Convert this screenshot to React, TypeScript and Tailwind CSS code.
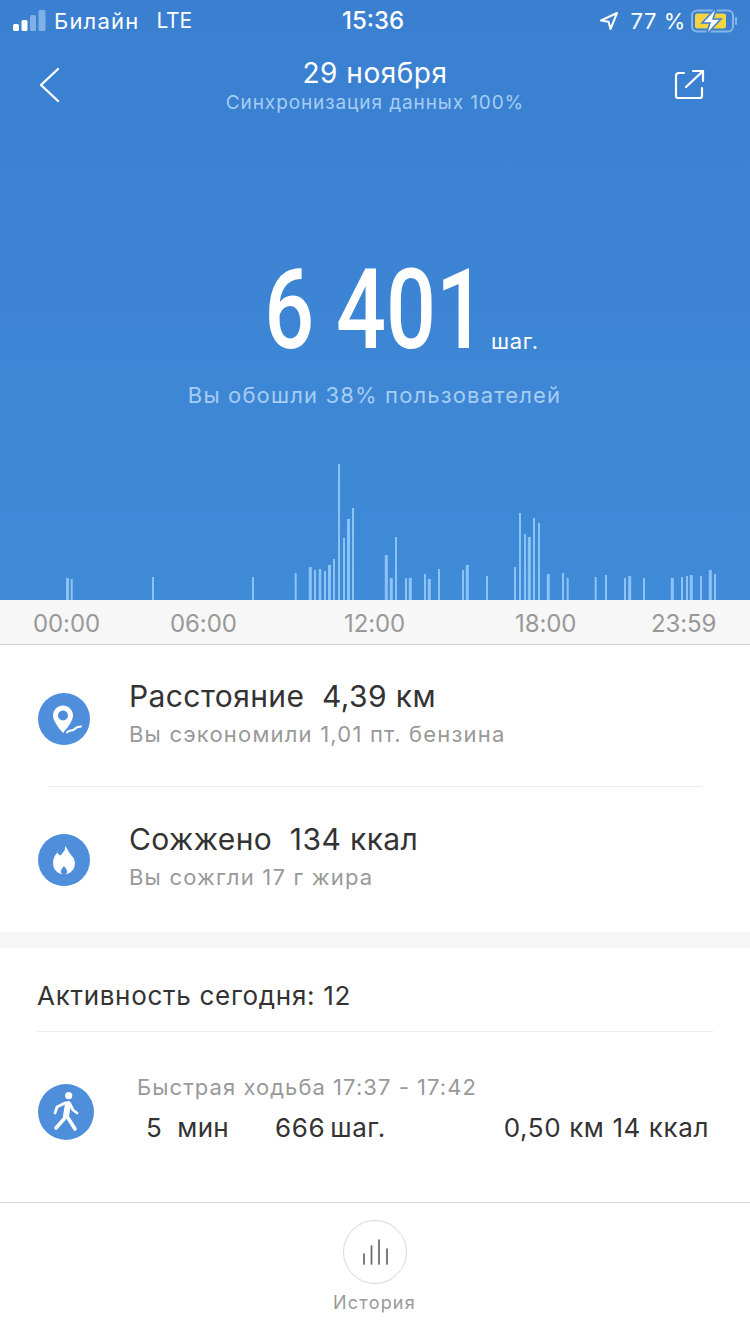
const bars: [number, number, number][] = [
  [67.5,3,22],[71.7,2,21],[153,2,23],[253,2,23],[295.7,2,27],[310.3,3,33],[315,2,30],[320,2.5,31],[325,2,29],[329.5,3,35],[334,2,41],[339,2,136],[344,2,62],[348.5,3,81],[353,2,92],
  [386.3,3,45],[391.3,3,22],[396,2,63],[406,2,22],[410.3,3,22],[425,2,26],[429.3,3,21],[439,2,31],[463,2,30],[467.3,3,35],[487,2,24],[515,2,33],[520,2,87],[525,2,66],[529.3,3,63],[534,2,82],[539,2,77],[548.3,3,26],[563,2,27],[567.7,2,22],[595.7,2,23],[606,2,25],[625,2,22],[629.7,3,24],[644,2,22],[672.3,3,22],[682,2,23],[687,2,24],[691.3,3,25],[701,2,24],[710.3,3,30],[715,2,26],
];

function Chart() {
  return (
    <svg width="750" height="140" viewBox="0 0 750 140" className="block">
      {bars.map(([x, w, h], i) => (
        <rect key={i} x={x - w / 2} y={140 - h} width={w} height={h} fill="#8cc2f4" />
      ))}
    </svg>
  );
}

function Status() {
  return (
    <div className="h-[42px] flex items-center justify-between pl-[13px] pr-[12px] text-white text-[22px] relative">
      <div className="flex items-center">
        <svg width="36" height="24" viewBox="0 0 36 24" className="mr-[5px]">
          <rect x="0" y="15" width="6" height="7" rx="1.5" fill="#fff" />
          <rect x="8.500" y="11" width="6" height="11" rx="1.5" fill="#fff" />
          <rect x="17" y="6" width="6" height="16" rx="1.5" fill="#7fb0e6" />
          <rect x="25.500" y="1" width="7" height="21" rx="1.5" fill="#7fb0e6" />
        </svg>
        <span className="tracking-[1.2px]">Билайн</span>
        <span className="ml-[17px] text-[21px] tracking-[-0.2px]">LTE</span>
      </div>
      <span className="absolute left-[342px] top-[7px] font-medium text-[24px] leading-[28px]">15:36</span>
      <div className="flex items-center">
        <svg width="20" height="20" viewBox="0 0 20 20" fill="none" stroke="#fff" strokeWidth="2" strokeLinejoin="round" className="mr-[11px]">
          <path d="M18 2 2 9.5l7.6 1.2L11.5 18z" />
        </svg>
        <span className="mr-[5px] tracking-[0.6px]">77 %</span>
        <svg width="47" height="28" viewBox="0 0 47 28">
          <rect x="1" y="3.500" width="41" height="21" rx="5" fill="none" stroke="#86b4e8" strokeWidth="2" />
          <rect x="44" y="10" width="2" height="8" rx="1" fill="#86b4e8" />
          <rect x="4" y="6.500" width="31" height="15" rx="2.500" fill="#f5d443" />
          <path d="M26 0 11 16h8l-4 12 15-16h-8z" fill="#fff" stroke="#3a7fd0" strokeWidth="1.500" />
        </svg>
      </div>
    </div>
  );
}

function Nav() {
  return (
    <div className="h-[78px] flex justify-between relative">
      <div className="pl-[38px] pt-[25px]">
        <svg width="24" height="38" viewBox="0 0 24 38" fill="none" stroke="#fff" strokeWidth="2.400" strokeLinecap="round" strokeLinejoin="round">
          <path d="M20 2 3 18l17 16" />
        </svg>
      </div>
      <div className="absolute inset-x-0 top-[10px] flex flex-col items-center">
        <span className="text-white text-[28px] leading-[42px] tracking-[0.5px]">29 ноября</span>
        <span className="text-[#a6cdf3] text-[19px] leading-[20px] -mt-[1px] tracking-[0.9px]">Синхронизация данных 100%</span>
      </div>
      <div className="pr-[44px] pt-[27px]">
        <svg width="32" height="32" viewBox="0 0 32 32" fill="none" stroke="#fff" strokeWidth="2.200" strokeLinecap="round" strokeLinejoin="round">
          <path d="M10 4H5a3 3 0 0 0-3 3v20a2 2 0 0 0 2 2h22a2 2 0 0 0 2-2v-8" />
          <path d="M12 18 29 2" />
          <path d="M19 2h10v10" />
        </svg>
      </div>
    </div>
  );
}

function PinIcon() {
  return (
    <div className="w-[52px] h-[52px] rounded-full bg-[#4f8edb] flex items-center justify-center shrink-0">
      <svg width="36" height="36" viewBox="0 0 36 36">
        <path fillRule="evenodd" d="M17 4.500C11.500 4.500 7 9 7 14.500c0 5 5 12 10 17.500 5-5.500 10-12.500 10-17.500 0-5.500-4.500-10-10-10zm0 5a5 5 0 1 1 0 10 5 5 0 0 1 0-10z" fill="#fff" />
        <path d="M21 31.500c2-3 5-1 7-3s3-3 7-3" fill="none" stroke="#4f8edb" strokeWidth="5" strokeLinecap="round" />
        <path d="M21 31.500c2-3 5-1 7-3s3-3 7-3" fill="none" stroke="#fff" strokeWidth="2" strokeLinecap="round" />
      </svg>
    </div>
  );
}

function FlameIcon() {
  return (
    <div className="w-[52px] h-[52px] rounded-full bg-[#4f8edb] flex items-center justify-center shrink-0">
      <svg width="26" height="31" viewBox="0 0 28 34">
        <path fillRule="evenodd" d="M15 1c1 5-2 7-5 10.500C7.500 10.500 7 9 7 8 3 12 2 16 2 20c0 7 5 12 12 12s12-5 12-12c0-7-5-9-7-13-1-2-2-4-4-6zM14 23c1 2 3.500 3.500 3.500 6 0 2-1.500 3-3.500 3s-3.500-1-3.500-3c0-2.500 2.500-4 3.500-6z" fill="#fff" />
      </svg>
    </div>
  );
}

function WalkIcon() {
  return (
    <div className="w-[56px] h-[56px] rounded-full bg-[#4f8edb] flex items-center justify-center shrink-0">
      <svg width="36" height="46" viewBox="0 0 36 46" fill="none" stroke="#fff" strokeLinecap="round" strokeLinejoin="round">
        <circle cx="20.700" cy="6.700" r="3.600" fill="#fff" stroke="none" />
        <path d="M20 15 18 27" strokeWidth="6" />
        <path d="M17 14 9 18l-2 6" strokeWidth="2.800" />
        <path d="M22 15l3 6 4 3" strokeWidth="2.800" />
        <path d="M18 26l4 6 5 8" strokeWidth="3.600" />
        <path d="M16 30 8 39" strokeWidth="3.600" />
      </svg>
    </div>
  );
}

function Row({ icon, title, sub, shift }: { icon: React.ReactNode; title: string; sub: string; shift?: boolean }) {
  return (
    <div className="flex items-center pl-[38px]">
      {icon}
      <div className={shift ? "ml-[39px] flex flex-col -mt-[9px]" : "ml-[39px] flex flex-col -mt-[12px]"}>
        <span className="text-[30px] leading-[36px] text-[#333] whitespace-pre tracking-[0.4px]">{title}</span>
        <span className="text-[22px] leading-[28px] mt-[6px] text-[#999] tracking-[1.2px]">{sub}</span>
      </div>
    </div>
  );
}

export default function App() {
  return (
    <div className="w-[750px] h-[1334px] bg-white overflow-hidden flex flex-col font-['Inter','Liberation_Sans',sans-serif]">
      <div className="h-[600px] bg-gradient-to-b from-[#3a7fd0] to-[#3f8bd8] flex flex-col">
        <Status />
        <Nav />
        <div className="flex justify-center mt-[120px] h-[115px] relative">
          <span className="text-white text-[112px] leading-[115px] font-medium font-['Roboto',sans-serif] scale-x-[0.785] whitespace-pre mt-[12px] pl-[1px]">6 401</span>
          <span className="absolute left-[491px] top-[87px] text-white text-[22px] leading-[28px] tracking-[0.7px]">шаг.</span>
        </div>
        <div className="text-center text-[#a6cdf3] text-[22px] leading-[30px] mt-[25px] pr-[1px] tracking-[1.150px]">Вы обошли 38% пользователей</div>
        <div className="flex-1" />
        <Chart />
      </div>
      <div className="h-[45px] bg-[#f7f7f7] border-b border-[#cfcfcf] relative text-[#999] text-[24px] leading-[44px] tracking-[-0.1px]">
        <span className="absolute left-[33px] top-[2px]">00:00</span>
        <span className="absolute left-[170px] top-[2px]">06:00</span>
        <span className="absolute left-[344px] top-[2px]">12:00</span>
        <span className="absolute left-[515px] top-[2px]">18:00</span>
        <span className="absolute left-[651px] top-[2px]">23:59</span>
      </div>
      <div className="h-[287px] flex flex-col">
        <div className="h-[141px] pt-[7px] flex items-center">
          <Row icon={<PinIcon />} title="Расстояние  4,39 км" sub="Вы сэкономили 1,01 пт. бензина" />
        </div>
        <div className="mx-[48px] h-px bg-[#ececec]" />
        <div className="h-[145px] pt-[1px] flex items-center">
          <Row icon={<FlameIcon />} title="Сожжено  134 ккал" sub="Вы сожгли 17 г жира" shift />
        </div>
      </div>
      <div className="h-[16px] bg-[#f7f7f7]" />
      <div className="px-[37px] h-[83px] flex items-center">
        <span className="text-[26px] text-[#333] pt-[11px] tracking-[0.7px]">Активность сегодня: 12</span>
      </div>
      <div className="mx-[37px] h-px bg-[#ececec]" />
      <div className="h-[170px] flex items-start pl-[38px] pt-[40px] relative">
        <div className="mt-[12px]"><WalkIcon /></div>
        <div className="ml-[43px] flex-1 flex flex-col">
          <span className="text-[22px] leading-[30px] text-[#999] tracking-[1.050px]">Быстрая ходьба 17:37 - 17:42</span>
          <div className="flex text-[26px] leading-[36px] text-[#333] mt-[8px] whitespace-pre tracking-[0.6px]">
            <span className="ml-[9px] tracking-[0.3px]">5  мин</span>
            <span className="ml-[46px]">666</span>
            <span className="ml-[5px]">шаг.</span>
            <span className="ml-auto mr-[41px]">0,50 км 14 ккал</span>
          </div>
        </div>
      </div>
      <div className="h-px bg-[#d6d6d6]" />
      <div className="flex-1 flex flex-col items-center pt-[17px] pr-[1px]">
        <div className="w-[64px] h-[64px] rounded-full border border-[#d8d8d8] flex items-center justify-center">
          <svg width="26" height="26" viewBox="0 0 26 26" fill="none" stroke="#666" strokeWidth="1.700" strokeLinecap="round">
            <path d="M2 15v10M9.500 7v18M17 1v24M25 10v15" />
          </svg>
        </div>
        <span className="text-[18px] leading-[24px] mt-[7px] text-[#999] tracking-[1.200px]">История</span>
      </div>
    </div>
  );
}
